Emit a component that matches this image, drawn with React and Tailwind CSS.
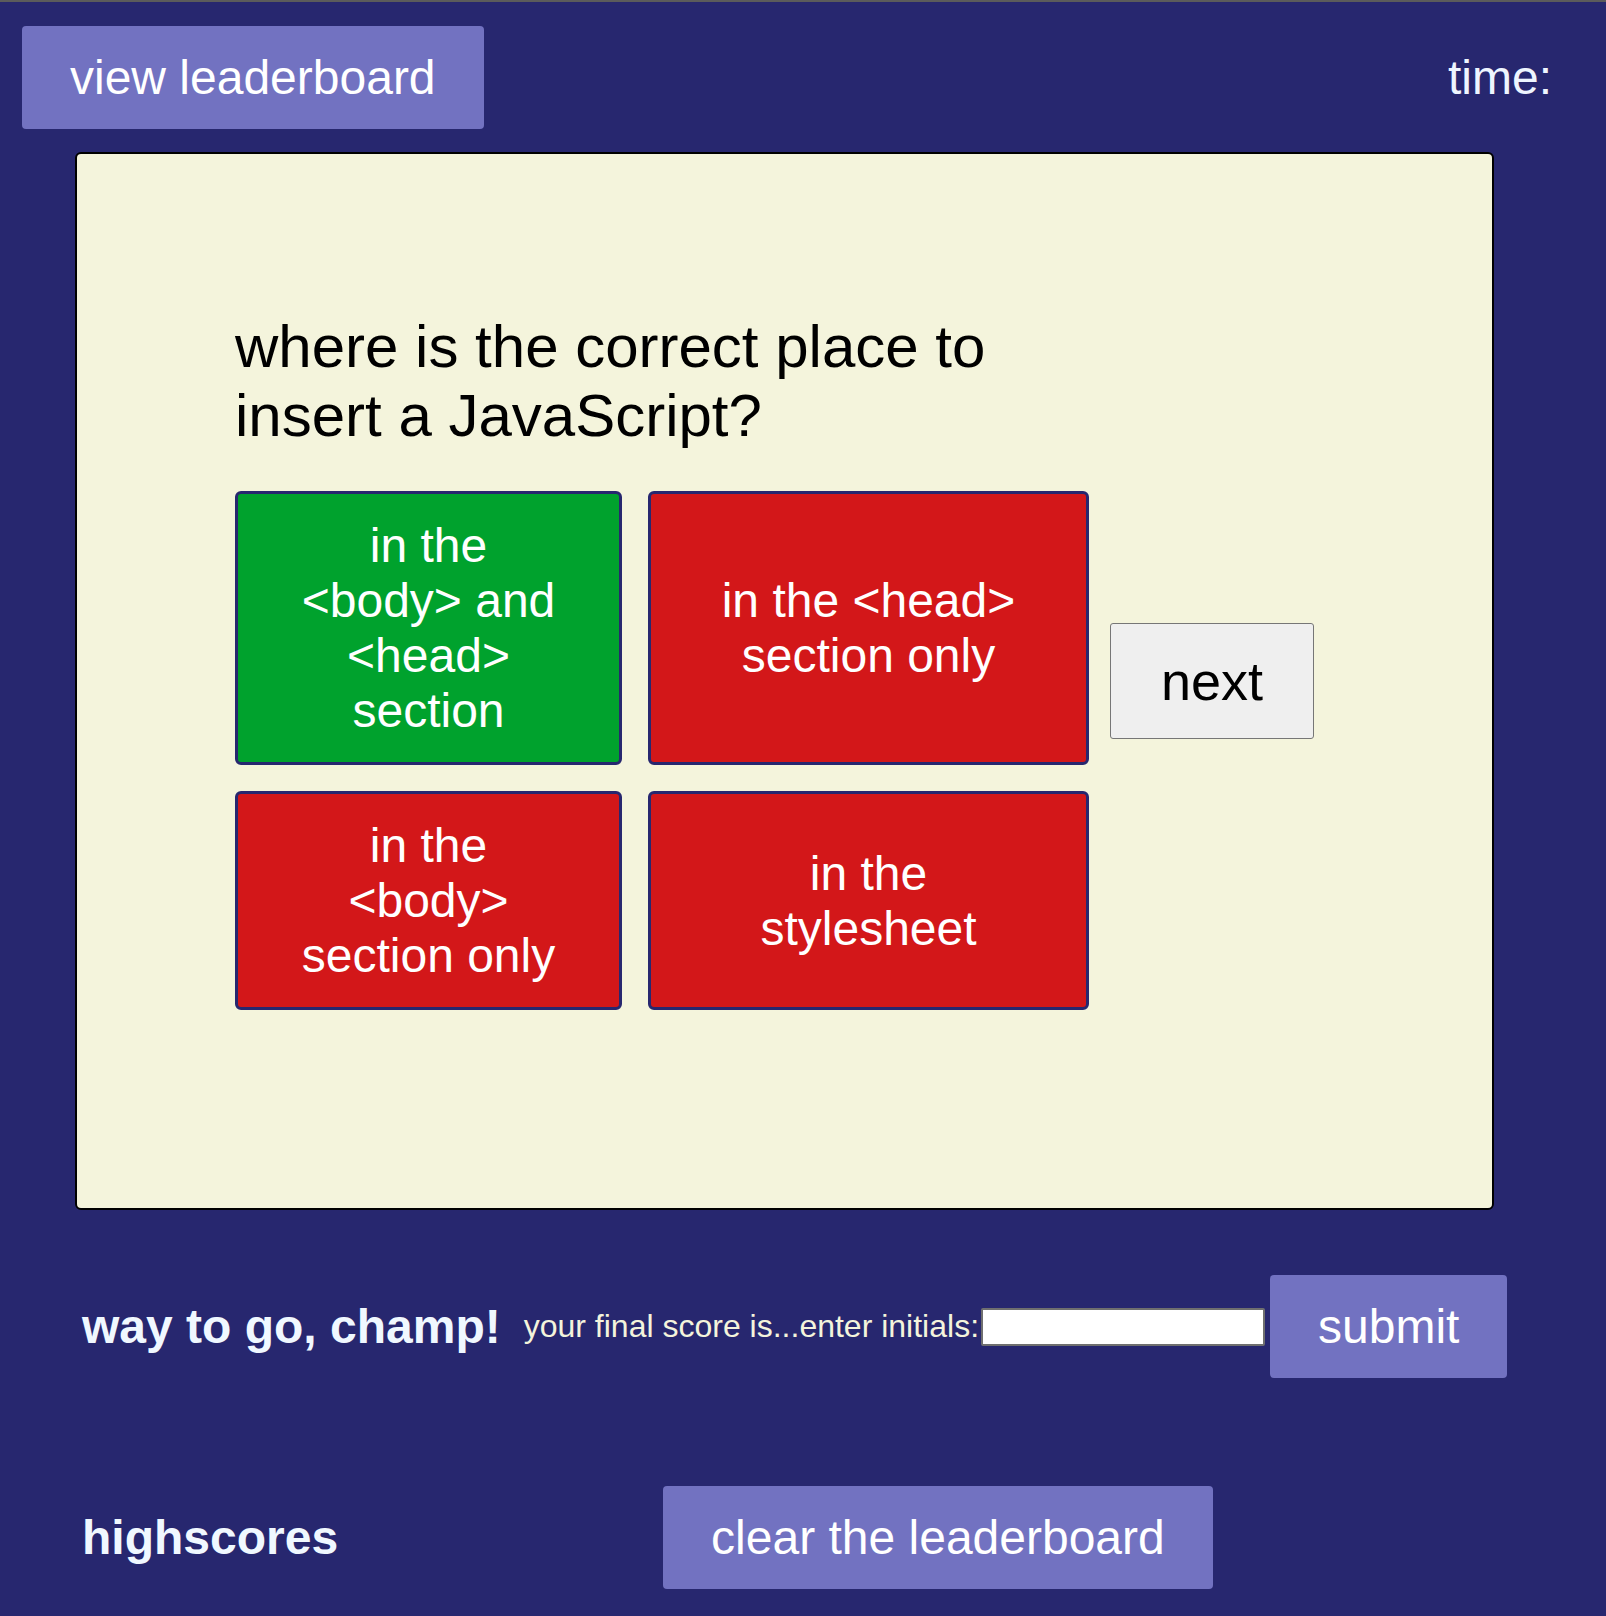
export default function App() {
    const answers = [
        { text: "in the <body> and <head> section", color: "bg-[#00a22d]" },
        { text: "in the <head> section only", color: "bg-[#d31719]" },
        { text: "in the <body> section only", color: "bg-[#d31719]" },
        { text: "in the stylesheet", color: "bg-[#d31719]" },
    ];

    return (
        <div className="min-h-screen bg-[#27276f] font-['Liberation_Sans',Arial,sans-serif]">
            <div className="h-[2px] bg-[#5b5b5b]"></div>

            {/* header */}
            <header className="flex items-start justify-between">
                <button className="ml-[22px] mt-[24px] rounded-[4px] bg-[#7272c1] px-12 py-6 text-[48px] leading-[55px] text-white">
                    view leaderboard
                </button>
                <p className="mr-[54px] mt-[48px] text-[48px] leading-[55px] text-[#eef5ff]">time:</p>
            </header>

            {/* quiz card */}
            <main className="ml-[75px] mt-[23px] flex h-[1058px] w-[1419px] items-start rounded-md border-2 border-black bg-[#f4f4dc]">
                <div className="w-[1011px] pl-[158px] pt-[158px]">
                    <h1 className="text-[60px] leading-[69px] text-black">
                        where is the correct place to insert a JavaScript?
                    </h1>
                    <div className="mt-[41px] grid grid-cols-[387px_441px] gap-[26px]">
                        {answers.map((a, i) => (
                            <button
                                key={i}
                                className={`${a.color} flex items-center justify-center rounded-md border-[3px] border-[#27276f] px-[55px] py-6 text-center text-[48px] leading-[55px] text-white`}
                            >
                                {a.text}
                            </button>
                        ))}
                    </div>
                </div>
                <button className="ml-[22px] h-[116px] w-[204px] self-center rounded-[3px] border border-[#767676] bg-[#efefef] text-[54px] leading-[62px] text-black">
                    next
                </button>
            </main>

            {/* final score */}
            <section className="mt-[65px] flex items-center pl-[82px]">
                <h2 className="text-[48px] font-bold leading-[55px] text-[#f0f8ff]">way to go, champ!</h2>
                <label className="ml-[23px] text-[32px] leading-[37px] text-[#f4f4dc]">
                    your final score is...enter initials:
                </label>
                <input className="ml-[2px] h-[38px] w-[284px] rounded-[2px] border-2 border-[#6f6f6f] bg-white" />
                <button className="ml-[5px] rounded-[4px] bg-[#7272c1] px-12 py-6 text-[48px] leading-[55px] text-white">
                    submit
                </button>
            </section>

            {/* highscores */}
            <section className="mt-[108px] flex items-center pl-[82px]">
                <h2 className="text-[48px] font-bold leading-[55px] text-[#f0f8ff]">highscores</h2>
                <button className="ml-[325px] rounded-[4px] bg-[#7272c1] px-12 py-6 text-[48px] leading-[55px] text-white">
                    clear the leaderboard
                </button>
            </section>
        </div>
    );
}
